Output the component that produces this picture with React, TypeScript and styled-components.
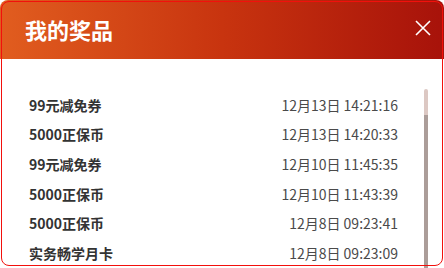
import * as React from "react";
import styled, { createGlobalStyle } from "styled-components";

const prizes = [
  { name: "99元减免券", time: "12月13日 14:21:16" },
  { name: "5000正保币", time: "12月13日 14:20:33" },
  { name: "99元减免券", time: "12月10日 11:45:35" },
  { name: "5000正保币", time: "12月10日 11:43:39" },
  { name: "5000正保币", time: "12月8日 09:23:41" },
  { name: "实务畅学月卡", time: "12月8日 09:23:09" },
];

export default function App() {
  return (
    <>
      <GlobalStyle />
      <Card>
        <Header>
          <Title>我的奖品</Title>
          <CloseButton aria-label="关闭">
            <svg width="16" height="16" viewBox="0 0 16 16">
              <path d="M1 1 L15 15 M15 1 L1 15" stroke="#fff" strokeWidth="1.6" fill="none" />
            </svg>
          </CloseButton>
        </Header>
        <Body>
          <List>
            {prizes.map((p, i) => (
              <Row key={i}>
                <Name>{p.name}</Name>
                <Time>{p.time}</Time>
              </Row>
            ))}
          </List>
          <Track>
            <Thumb />
          </Track>
        </Body>
      </Card>
    </>
  );
}

const GlobalStyle = createGlobalStyle`
  html, body {
    margin: 0;
    padding: 0;
    background: #fff;
  }
  body {
    font-family: "Noto Sans CJK SC", "Noto Sans", sans-serif;
  }
`;

const Card = styled.div`
  position: relative;
  width: 444px;
  height: 268px;
  overflow: hidden;
  display: flex;
  flex-direction: column;
  background: #fff;

  &::after {
    content: "";
    position: absolute;
    top: 1px;
    left: 1px;
    right: 1px;
    bottom: 2px;
    border: 1px solid #f2100c;
    border-radius: 8px;
    pointer-events: none;
  }
`;

const Header = styled.div`
  height: 59px;
  flex: none;
  display: flex;
  align-items: center;
  justify-content: space-between;
  padding: 0 12px 0 25px;
  box-sizing: border-box;
  background: linear-gradient(90deg, #e15d1f 0%, #c8340f 50%, #a7120a 100%);
  border-radius: 8px 8px 0 0;
`;

const Title = styled.h1`
  margin: 0 0 2px;
  color: #fff;
  font-size: 22px;
  font-weight: 700;
  line-height: 1;
`;

const CloseButton = styled.button`
  display: flex;
  align-items: center;
  justify-content: center;
  width: 18px;
  height: 18px;
  margin-bottom: 3px;
  padding: 0;
  border: 0;
  background: none;
  cursor: pointer;
`;

const Body = styled.div`
  flex: 1;
  display: flex;
  padding-right: 16px;
`;

const List = styled.ul`
  flex: 1;
  margin: 0;
  padding: 31px 26px 0 29px;
  list-style: none;
`;

const Row = styled.li`
  display: flex;
  align-items: center;
  justify-content: space-between;
  height: 29.6px;
  font-size: 14px;
`;

const Name = styled.span`
  color: #333;
  font-weight: 700;
`;

const Time = styled.span`
  color: #4a4a4a;
`;

const Track = styled.div`
  width: 4px;
  margin-top: 30px;
  display: flex;
  flex-direction: column;
  background: #dcc8c3;
  border-radius: 2px 2px 0 0;
`;

const Thumb = styled.div`
  flex: 1;
  margin-top: 26px;
  background: #ab9d99;
`;
